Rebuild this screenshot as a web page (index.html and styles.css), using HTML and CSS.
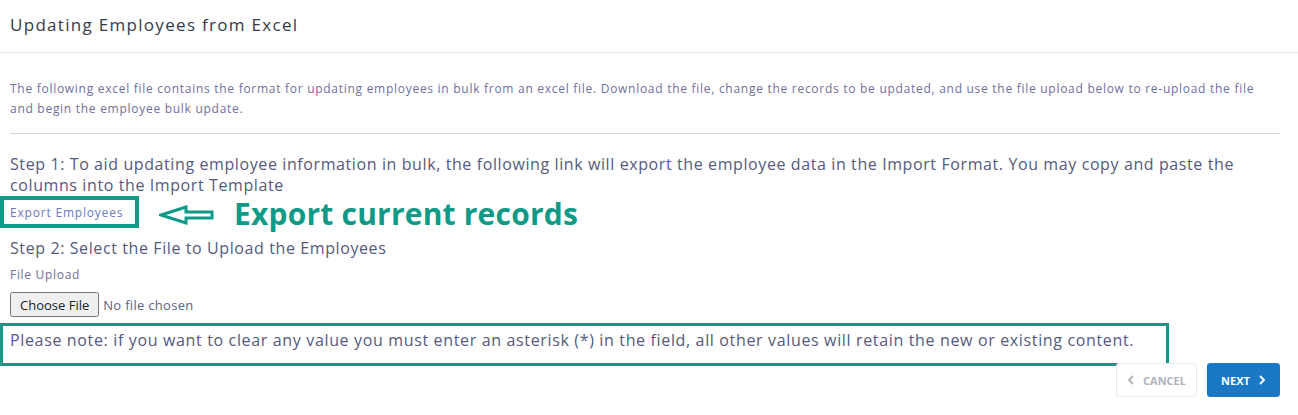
FILE: index.html
```html
<!DOCTYPE html>
<html lang="en">
<head>
  <meta charset="UTF-8" />
  <title>Updating Employees from Excel</title>
  <link rel="stylesheet" href="styles.css">
</head>
<body>
  <header class="page-header">
    <h1>Updating Employees from Excel</h1>
  </header>

  <div class="content">
    <p class="intro">The following excel file contains the format for updating employees in bulk from an excel file. Download the file, change the records to be updated, and use the file upload below to re-upload the file and begin the employee bulk update.</p>
    <hr>

    <h2 class="step">Step 1: To aid updating employee information in bulk, the following link will export the employee data in the Import Format. You may copy and paste the columns into the Import Template</h2>

    <div class="export-row">
      <div class="export-box"><a href="#">Export Employees</a></div>
      <svg class="arrow" width="56" height="20" viewBox="0 0 56 20">
        <path d="M2 10 L27 2 L27 7 L53 7 L53 13 L27 13 L27 18 Z" fill="none" stroke="#0f9a88" stroke-width="3"/>
      </svg>
      <span class="callout">Export current records</span>
    </div>

    <h2 class="step step-2">Step 2: Select the File to Upload the Employees</h2>
    <label class="field-label" for="upload">File Upload</label>
    <input type="file" id="upload">

    <div class="note">Please note: if you want to clear any value you must enter an asterisk (*) in the field, all other values will retain the new or existing content.</div>

    <div class="actions">
      <button class="btn btn-cancel">
        <svg width="8" height="10" viewBox="0 0 8 10"><path d="M6 1 L2 5 L6 9" fill="none" stroke="currentColor" stroke-width="1.8"/></svg>
        CANCEL
      </button>
      <button class="btn btn-next">
        NEXT
        <svg width="8" height="10" viewBox="0 0 8 10"><path d="M2 1 L6 5 L2 9" fill="none" stroke="currentColor" stroke-width="1.8"/></svg>
      </button>
    </div>
  </div>
</body>
</html>
```

FILE: styles.css
```css
body {
  margin: 0;
  font-family: "Open Sans", Arial, sans-serif;
  background: #fff;
}
.page-header {
  height: 53px;
  box-sizing: border-box;
  border-bottom: 1px solid #e8e8ec;
  padding: 0 10px 3px;
  display: flex;
  align-items: center;
}
.page-header h1 {
  margin: 0;
  font-size: 17px;
  font-weight: 500;
  letter-spacing: 1.3px;
  color: #353a4b;
}
.content {
  padding: 0 18px 0 10px;
}
.intro {
  margin: 26px 0 0;
  font-size: 12px;
  line-height: 20px;
  letter-spacing: 0.72px;
  color: #6f6f9d;
}
hr {
  border: 0;
  border-top: 1px solid #d8d8dc;
  margin: 14px 0 0;
}
.step {
  margin: 20px 0 0;
  font-size: 16px;
  font-weight: 500;
  line-height: 21px;
  letter-spacing: 0.6px;
  color: #555a7c;
}
.export-row {
  display: flex;
  align-items: center;
  height: 32px;
  margin: 0 0 0 -10px;
}
.export-box {
  width: 125px;
  height: 24px;
  border: 4px solid #0f9a88;
  padding-left: 6px;
  display: flex;
  align-items: center;
}
.export-box a {
  font-size: 12px;
  letter-spacing: 0.8px;
  color: #6a79c0;
  text-decoration: none;
}
.arrow {
  margin-left: 20px;
  margin-top: 6px;
}
.callout {
  margin-left: 19px;
  margin-top: 4px;
  font-family: "Open Sans", Lato, sans-serif;
  font-weight: 700;
  font-size: 30px;
  line-height: 32px;
  letter-spacing: 0.2px;
  color: #0f9a88;
}
.step-2 {
  margin-top: 10px;
}
.field-label {
  display: block;
  margin-top: 6px;
  font-size: 12px;
  line-height: 20px;
  letter-spacing: 0.7px;
  color: #6f6f9d;
}
input[type="file"] {
  margin-top: 7px;
  font-family: "Open Sans", Arial, sans-serif;
  font-size: 13px;
  letter-spacing: 0.3px;
  color: #5d6283;
}
input[type="file"]::file-selector-button {
  height: 25px;
  padding: 0 8px;
  font-family: "Open Sans", Arial, sans-serif;
  font-size: 13px;
  color: #222;
}
.note {
  margin: 6px 0 0 -10px;
  width: 1156px;
  height: 37px;
  border: 3px solid #0f9a88;
  padding-left: 7px;
  font-size: 16px;
  font-weight: 500;
  line-height: 28px;
  letter-spacing: 0.65px;
  color: #555a7c;
}
.actions {
  display: flex;
  justify-content: flex-end;
  gap: 10px;
  margin-top: -3px;
}
.btn {
  height: 34px;
  border-radius: 3px;
  font-family: "Open Sans", Arial, sans-serif;
  font-size: 11px;
  font-weight: 700;
  display: flex;
  align-items: center;
  justify-content: center;
  gap: 8px;
  padding: 0;
  cursor: pointer;
}
.btn-cancel {
  width: 81px;
  background: #fff;
  border: 1px solid #e6ebf2;
  color: #b0b3b8;
}
.btn-next {
  width: 73px;
  background: #1b78c4;
  border: 1px solid #1b78c4;
  color: #fff;
}
```
